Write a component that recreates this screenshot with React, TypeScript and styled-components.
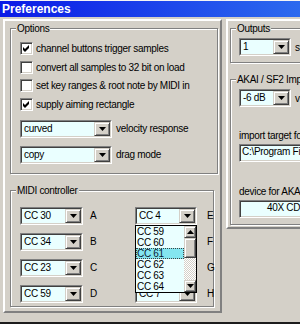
import styled, { createGlobalStyle } from "styled-components";

const GlobalStyle = createGlobalStyle`
  html, body {
    margin: 0;
    padding: 0;
    overflow: hidden;
    background: #d4d0c8;
  }
  body {
    font-family: "Liberation Sans", Arial, sans-serif;
    font-size: 10px;
    letter-spacing: -0.3px;
    color: #000;
  }
`;

const options = [
  { label: "channel buttons trigger samples", checked: true },
  { label: "convert all samples to 32 bit on load", checked: false },
  { label: "set key ranges & root note by MIDI in", checked: false },
  { label: "supply aiming rectangle", checked: true },
];

const midiRows = [
  { left: "CC 30", a: "A", right: "CC 4", b: "E" },
  { left: "CC 34", a: "B", right: "CC 7", b: "F" },
  { left: "CC 23", a: "C", right: "CC 10", b: "G" },
  { left: "CC 59", a: "D", right: "CC 7", b: "H" },
];

const listItems = ["CC 59", "CC 60", "CC 61", "CC 62", "CC 63", "CC 64"];

const Arrow = ({ up }: { up?: boolean }) => (
  <svg width="7" height="4" viewBox="0 0 7 4">
    <polygon points={up ? "3.5,0 7,4 0,4" : "0,0 7,0 3.5,4"} fill="#000" />
  </svg>
);

const Combo = ({ value, width }: { value: string; width: number }) => (
  <ComboOuter $w={width}>
    <ComboInner>
      <ComboText>{value}</ComboText>
      <DropButton>
        <Arrow />
      </DropButton>
    </ComboInner>
  </ComboOuter>
);

const App = () => {
  return (
    <Window>
      <GlobalStyle />
      <TitleBar>Preferences</TitleBar>
      <Body>
        <LeftPanel>
          <Group $w={208}>
            <Legend>Options</Legend>
            <CheckList>
              {options.map((o) => (
                <CheckRow key={o.label}>
                  <CheckBox>
                    {o.checked && (
                      <svg width="7" height="7" viewBox="0 0 7 7">
                        <path d="M0 2 L2 4 L6 0 L6 3 L2 7 L0 5 Z" fill="#000" />
                      </svg>
                    )}
                  </CheckBox>
                  {o.label}
                </CheckRow>
              ))}
            </CheckList>
            <ComboRows>
              <ComboRow>
                <Combo value="curved" width={92} />
                <span>velocity response</span>
              </ComboRow>
              <ComboRow>
                <Combo value="copy" width={92} />
                <span>drag mode</span>
              </ComboRow>
            </ComboRows>
          </Group>

          <Group $w={204} $top={16}>
            <Legend>MIDI controller</Legend>
            <MidiGrid>
              {midiRows.map((r, i) => (
                <MidiRow key={r.a}>
                  <Combo value={r.left} width={63} />
                  <Letter $pad={7}>{r.a}</Letter>
                  <PopupAnchor>
                    <Combo value={r.right} width={62} />
                    {i === 0 && (
                      <DropList>
                        <Items>
                          {listItems.map((item) => (
                            <Item key={item} $selected={item === "CC 61"}>
                              {item}
                            </Item>
                          ))}
                        </Items>
                        <ScrollBar>
                          <ScrollButton>
                            <Arrow up />
                          </ScrollButton>
                          <Thumb />
                          <Track />
                          <ScrollButton>
                            <Arrow />
                          </ScrollButton>
                        </ScrollBar>
                      </DropList>
                    )}
                  </PopupAnchor>
                  <Letter $pad={10}>{r.b}</Letter>
                </MidiRow>
              ))}
            </MidiGrid>
          </Group>
        </LeftPanel>

        <RightPanel>
          <Group $w={170}>
            <Legend>Outputs</Legend>
            <SmallRow>
              <Combo value="1" width={52} />
              <span>stereo outputs</span>
            </SmallRow>
          </Group>
          <Group $w={170} $top={16}>
            <Legend>AKAI / SF2 Import</Legend>
            <SmallRow>
              <Combo value="-6 dB" width={52} />
              <span>volume</span>
            </SmallRow>
            <FieldLabel>import target folder</FieldLabel>
            <TextField>C:\Program Files\Samples</TextField>
            <FieldLabel $top={23}>device for AKAI CD-ROM</FieldLabel>
            <TextField $indent={27}>40X CD-ROM</TextField>
          </Group>
        </RightPanel>
      </Body>
    </Window>
  );
};

export default App;

const Window = styled.div`
  width: 420px;
  height: 324px;
  box-sizing: border-box;
  border-top: 1px solid #f4f4f4;
  background: #d4d0c8;
  display: flex;
  flex-direction: column;
`;

const TitleBar = styled.div`
  height: 16px;
  flex-shrink: 0;
  display: flex;
  align-items: center;
  padding-left: 2px;
  background: linear-gradient(90deg, #0a1ae6 0%, #3a8af2 100%);
  color: #fff;
  font-weight: bold;
  font-size: 12px;
  letter-spacing: 0;
`;

const Body = styled.div`
  flex: 1;
  display: flex;
  align-items: flex-start;
  gap: 4px;
  padding: 2px 0 9px 3px;
  border-bottom: 2px solid #1c1c1c;
`;

const LeftPanel = styled.div`
  width: 219px;
  align-self: stretch;
  box-sizing: border-box;
  padding: 7px 2px 0 5px;
  border: 2px solid;
  border-color: #ffffff #808080 #808080 #ffffff;
`;

const RightPanel = styled.div`
  width: 190px;
  box-sizing: border-box;
  padding: 7px 0 2px 2px;
  border: 2px solid;
  border-color: #ffffff #808080 #808080 #ffffff;
`;

const Group = styled.div<{ $w: number; $top?: number }>`
  width: ${(p) => p.$w}px;
  box-sizing: border-box;
  margin-top: ${(p) => p.$top ?? 0}px;
  padding: 0 4px 6px 8px;
  border: 1px solid #808080;
  box-shadow: inset 1px 1px 0 #fff, 1px 1px 0 #fff;
`;

const Legend = styled.div`
  width: fit-content;
  margin: -7px 0 0 -3px;
  padding: 0 1px;
  line-height: 13px;
  background: #d4d0c8;
`;

const CheckList = styled.div`
  display: flex;
  flex-direction: column;
  gap: 5.67px;
  margin-top: 7px;
  padding-left: 1px;
`;

const CheckRow = styled.div`
  display: flex;
  align-items: center;
  gap: 3px;
  height: 13px;
  line-height: 13px;
  white-space: nowrap;
`;

const CheckBox = styled.div`
  width: 13px;
  height: 13px;
  box-sizing: border-box;
  flex-shrink: 0;
  display: flex;
  align-items: center;
  justify-content: center;
  background: #fff;
  border: 1px solid;
  border-color: #808080 #fff #fff #808080;
  box-shadow: inset 1px 1px 0 #404040, inset -1px -1px 0 #d4d0c8;
`;

const ComboRows = styled.div`
  display: flex;
  flex-direction: column;
  gap: 8px;
  margin-top: 9px;
  padding: 0 0 3px 1px;
`;

const ComboRow = styled.div`
  display: flex;
  align-items: center;
  gap: 4px;
  white-space: nowrap;
`;

const ComboOuter = styled.div<{ $w: number }>`
  width: ${(p) => p.$w}px;
  height: 18px;
  box-sizing: border-box;
  flex-shrink: 0;
  border: 1px solid;
  border-color: #808080 #fff #fff #808080;
`;

const ComboInner = styled.div`
  height: 100%;
  box-sizing: border-box;
  display: flex;
  border: 1px solid;
  border-color: #404040 #d4d0c8 #d4d0c8 #404040;
  background: #eaffff;
`;

const ComboText = styled.div`
  flex: 1;
  padding-left: 2px;
  line-height: 14px;
  overflow: hidden;
  white-space: nowrap;
`;

const DropButton = styled.div`
  width: 16px;
  box-sizing: border-box;
  display: flex;
  align-items: center;
  justify-content: center;
  background: #d4d0c8;
  border: 1px solid;
  border-color: #d4d0c8 #404040 #404040 #d4d0c8;
  box-shadow: inset 1px 1px 0 #fff, inset -1px -1px 0 #808080;
`;

const MidiGrid = styled.div`
  display: flex;
  flex-direction: column;
  gap: 8px;
  margin: 10px 0 -3px;
`;

const MidiRow = styled.div`
  display: grid;
  grid-template-columns: 63px 52px 62px auto;
  align-items: center;
  padding-left: 1px;
`;

const Letter = styled.div<{ $pad: number }>`
  padding-left: ${(p) => p.$pad}px;
`;

const PopupAnchor = styled.div`
  position: relative;
`;

const DropList = styled.div`
  position: absolute;
  top: 100%;
  left: 0;
  z-index: 2;
  width: 62px;
  height: 68px;
  box-sizing: border-box;
  display: flex;
  border: 1px solid #000;
  background: #eaffff;
`;

const Items = styled.div`
  flex: 1;
  display: flex;
  flex-direction: column;
`;

const Item = styled.div<{ $selected?: boolean }>`
  height: 11px;
  line-height: 11px;
  padding-left: 1px;
  box-sizing: border-box;
  color: ${(p) => (p.$selected ? "#0c2030" : "#000")};
  background: ${(p) => (p.$selected ? "#84e6f0" : "transparent")};
  outline: ${(p) => (p.$selected ? "1px dotted #404040" : "none")};
  outline-offset: -1px;
`;

const ScrollBar = styled.div`
  width: 12px;
  display: flex;
  flex-direction: column;
  background: repeating-conic-gradient(#ffffff 0 25%, #d4d0c8 0 50%) 0 0 / 2px 2px;
`;

const ScrollButton = styled.div`
  height: 12px;
  box-sizing: border-box;
  display: flex;
  align-items: center;
  justify-content: center;
  background: #d4d0c8;
  border: 1px solid;
  border-color: #d4d0c8 #404040 #404040 #d4d0c8;
  box-shadow: inset 1px 1px 0 #fff, inset -1px -1px 0 #808080;
`;

const Thumb = styled(ScrollButton)`
  height: 20px;
`;

const Track = styled.div`
  flex: 1;
`;

const SmallRow = styled.div`
  display: flex;
  align-items: center;
  gap: 4px;
  margin-top: 3px;
  white-space: nowrap;
`;

const FieldLabel = styled.div<{ $top?: number }>`
  margin-top: ${(p) => p.$top ?? 22}px;
  line-height: 13px;
  white-space: nowrap;
`;

const TextField = styled.div<{ $indent?: number }>`
  height: 18px;
  margin-top: 2px;
  box-sizing: border-box;
  padding-left: ${(p) => p.$indent ?? 2}px;
  line-height: 14px;
  white-space: nowrap;
  overflow: hidden;
  background: #eaffff;
  border: 1px solid;
  border-color: #808080 #fff #fff #808080;
  box-shadow: inset 1px 1px 0 #404040, inset -1px -1px 0 #d4d0c8;
`;
